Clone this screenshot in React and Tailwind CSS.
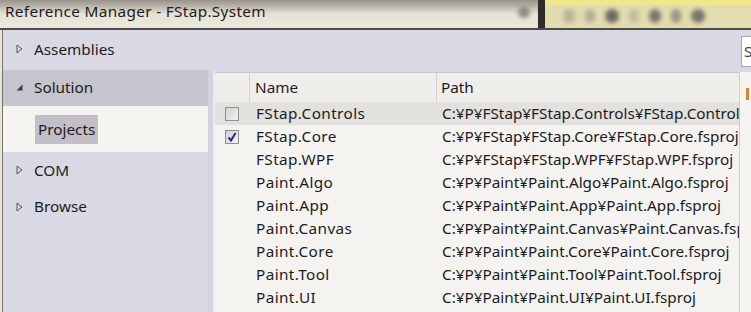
import React from "react";

const rows = [
  { name: "FStap.Controls", path: "C:¥P¥FStap¥FStap.Controls¥FStap.Controls.fsproj", box: "empty", hot: true },
  { name: "FStap.Core", path: "C:¥P¥FStap¥FStap.Core¥FStap.Core.fsproj", box: "checked" },
  { name: "FStap.WPF", path: "C:¥P¥FStap¥FStap.WPF¥FStap.WPF.fsproj" },
  { name: "Paint.Algo", path: "C:¥P¥Paint¥Paint.Algo¥Paint.Algo.fsproj" },
  { name: "Paint.App", path: "C:¥P¥Paint¥Paint.App¥Paint.App.fsproj" },
  { name: "Paint.Canvas", path: "C:¥P¥Paint¥Paint.Canvas¥Paint.Canvas.fsproj" },
  { name: "Paint.Core", path: "C:¥P¥Paint¥Paint.Core¥Paint.Core.fsproj" },
  { name: "Paint.Tool", path: "C:¥P¥Paint¥Paint.Tool¥Paint.Tool.fsproj" },
  { name: "Paint.UI", path: "C:¥P¥Paint¥Paint.UI¥Paint.UI.fsproj" },
];

const Collapsed = () => (
  <svg width="7" height="10" viewBox="0 0 7 10" className="shrink-0">
    <path d="M1 1 L6 5 L1 9 Z" fill="none" stroke="#555" strokeWidth="1" />
  </svg>
);

const Expanded = () => (
  <svg width="7" height="7" viewBox="0 0 7 7" className="shrink-0">
    <path d="M6.5 0.5 L6.5 6.5 L0.5 6.5 Z" fill="#3a3a3a" />
  </svg>
);

const CheckBox = ({ checked }) => (
  <div className="w-[14px] h-[14px] border border-[#8e8e8e] bg-gradient-to-br from-[#d2d2d2] to-[#f2f2f2] flex items-center justify-center">
    {checked && (
      <svg width="10" height="10" viewBox="0 0 10 10">
        <path d="M1.5 5.5 L4 8.5 L8.5 1" fill="none" stroke="#222a80" strokeWidth="2" />
      </svg>
    )}
  </div>
);

const Blob = ({ w, c }) => (
  <div className={`h-[14px] rounded-full blur-[2px] ${w} ${c}`} />
);

export default function App() {
  return (
    <div
      className="w-[751px] h-[312px] overflow-hidden flex flex-col text-[#1c1c1c] text-[15.3px] bg-[#e9e5d8]"
      style={{ fontFamily: '"Noto Sans", "Noto Sans CJK JP", sans-serif' }}
    >
      {/* window title */}
      <div className="h-[30px] shrink-0 flex border-b-2 border-[#4e4a45] bg-gradient-to-b from-[#97938a] via-[#e6e2d5] to-[#ece9dc]">
        <div className="w-[538px] flex items-center pl-[5px] leading-none pb-[4px] tracking-[0.35px]">
          <span>Reference Manager - FStap.System</span>
          <div className="ml-auto mr-[8px] w-[12px] h-[12px] rounded-full bg-[#8d8a84] blur-[2px]" />
        </div>
        <div className="w-[7px] bg-[#2e2c2a]" />
        <div className="flex-1 flex flex-col bg-[#e3dcb0]">
          <div className="h-[5px] bg-[#efe78c]" />
          <div className="flex items-center gap-[10px] pl-[18px] pt-[4px]">
            <Blob w="w-[12px]" c="bg-[#b9b39c]" />
            <Blob w="w-[10px]" c="bg-[#b5ae98]" />
            <Blob w="w-[14px]" c="bg-[#6e6a62]" />
            <Blob w="w-[10px]" c="bg-[#c4bca0]" />
            <Blob w="w-[12px]" c="bg-[#7d786e]" />
            <Blob w="w-[10px]" c="bg-[#9b9584]" />
            <Blob w="w-[14px]" c="bg-[#7a756c]" />
          </div>
        </div>
      </div>

      {/* dialog body */}
      <div className="flex-1 flex flex-col ml-[2px] border-l border-[#77736d] bg-[#d9d9e5]">
        <div className="h-[40px] shrink-0 flex items-center">
          <div className="flex items-center gap-[11px] pl-[13px] pb-[2px]">
            <Collapsed />
            <span>Assemblies</span>
          </div>
          <div className="ml-auto self-start mt-[6px] w-[10px] h-[31px] bg-white border border-r-0 border-[#a9a9b0] flex items-center pl-[2px] text-[#444]">
            S
          </div>
        </div>

        <div className="flex-1 flex">
          <div className="w-[205px] flex flex-col">
            <div className="h-[36px] flex items-center gap-[11px] pl-[13px] pb-[1px] bg-[#c6c5cd]">
              <Expanded />
              <span>Solution</span>
            </div>
            <div className="h-[46px] flex items-center pl-[32px] bg-[#f5f4f1]">
              <div className="h-[29px] px-[3px] flex items-center bg-[#c2bfc9]">Projects</div>
            </div>
            <div className="h-[36px] flex items-center gap-[11px] pl-[13px]">
              <Collapsed />
              <span>COM</span>
            </div>
            <div className="h-[38px] flex items-center gap-[11px] pl-[13px] pb-[1px]">
              <Collapsed />
              <span>Browse</span>
            </div>
          </div>
          <div className="w-[5px] bg-[#d3d3df] border-r-2 border-[#ebeaf0] box-content" />

          <div className="flex-1 flex flex-col">
            <div className="h-[2px] bg-[#d9d9e5]" />
            <div className="flex-1 flex bg-[#f4f3f0]">
              <div className="w-[524px] overflow-hidden flex flex-col">
                <div className="h-[30px] flex border-t border-[#c9c9c9] bg-[#efeeeb]">
                  <div className="w-[35px] border-r border-[#d2d2d2]" />
                  <div className="w-[187px] flex items-center pl-[5px] border-r border-[#d2d2d2]">Name</div>
                  <div className="flex-1 flex items-center pl-[4px]">Path</div>
                </div>
                {rows.map((r) => (
                  <div
                    key={r.name}
                    className={`h-[23px] flex items-center whitespace-nowrap ${r.hot ? "bg-[#e2e1de]" : ""}`}
                  >
                    <div className="w-[35px] shrink-0 flex justify-center pr-[1px]">
                      {r.box && <CheckBox checked={r.box === "checked"} />}
                    </div>
                    <div className="w-[187px] shrink-0 pl-[6px] tracking-[0.4px]">{r.name}</div>
                    <div className="pl-[5px]">{r.path}</div>
                  </div>
                ))}
              </div>
              <div className="flex-1 border-l border-[#cfcfcf] bg-[#f5f4f1] pt-[16px] pl-[6px]">
                <div className="w-[3px] h-[12px] bg-[#d9822b]" />
              </div>
            </div>
          </div>
        </div>
      </div>
    </div>
  );
}
